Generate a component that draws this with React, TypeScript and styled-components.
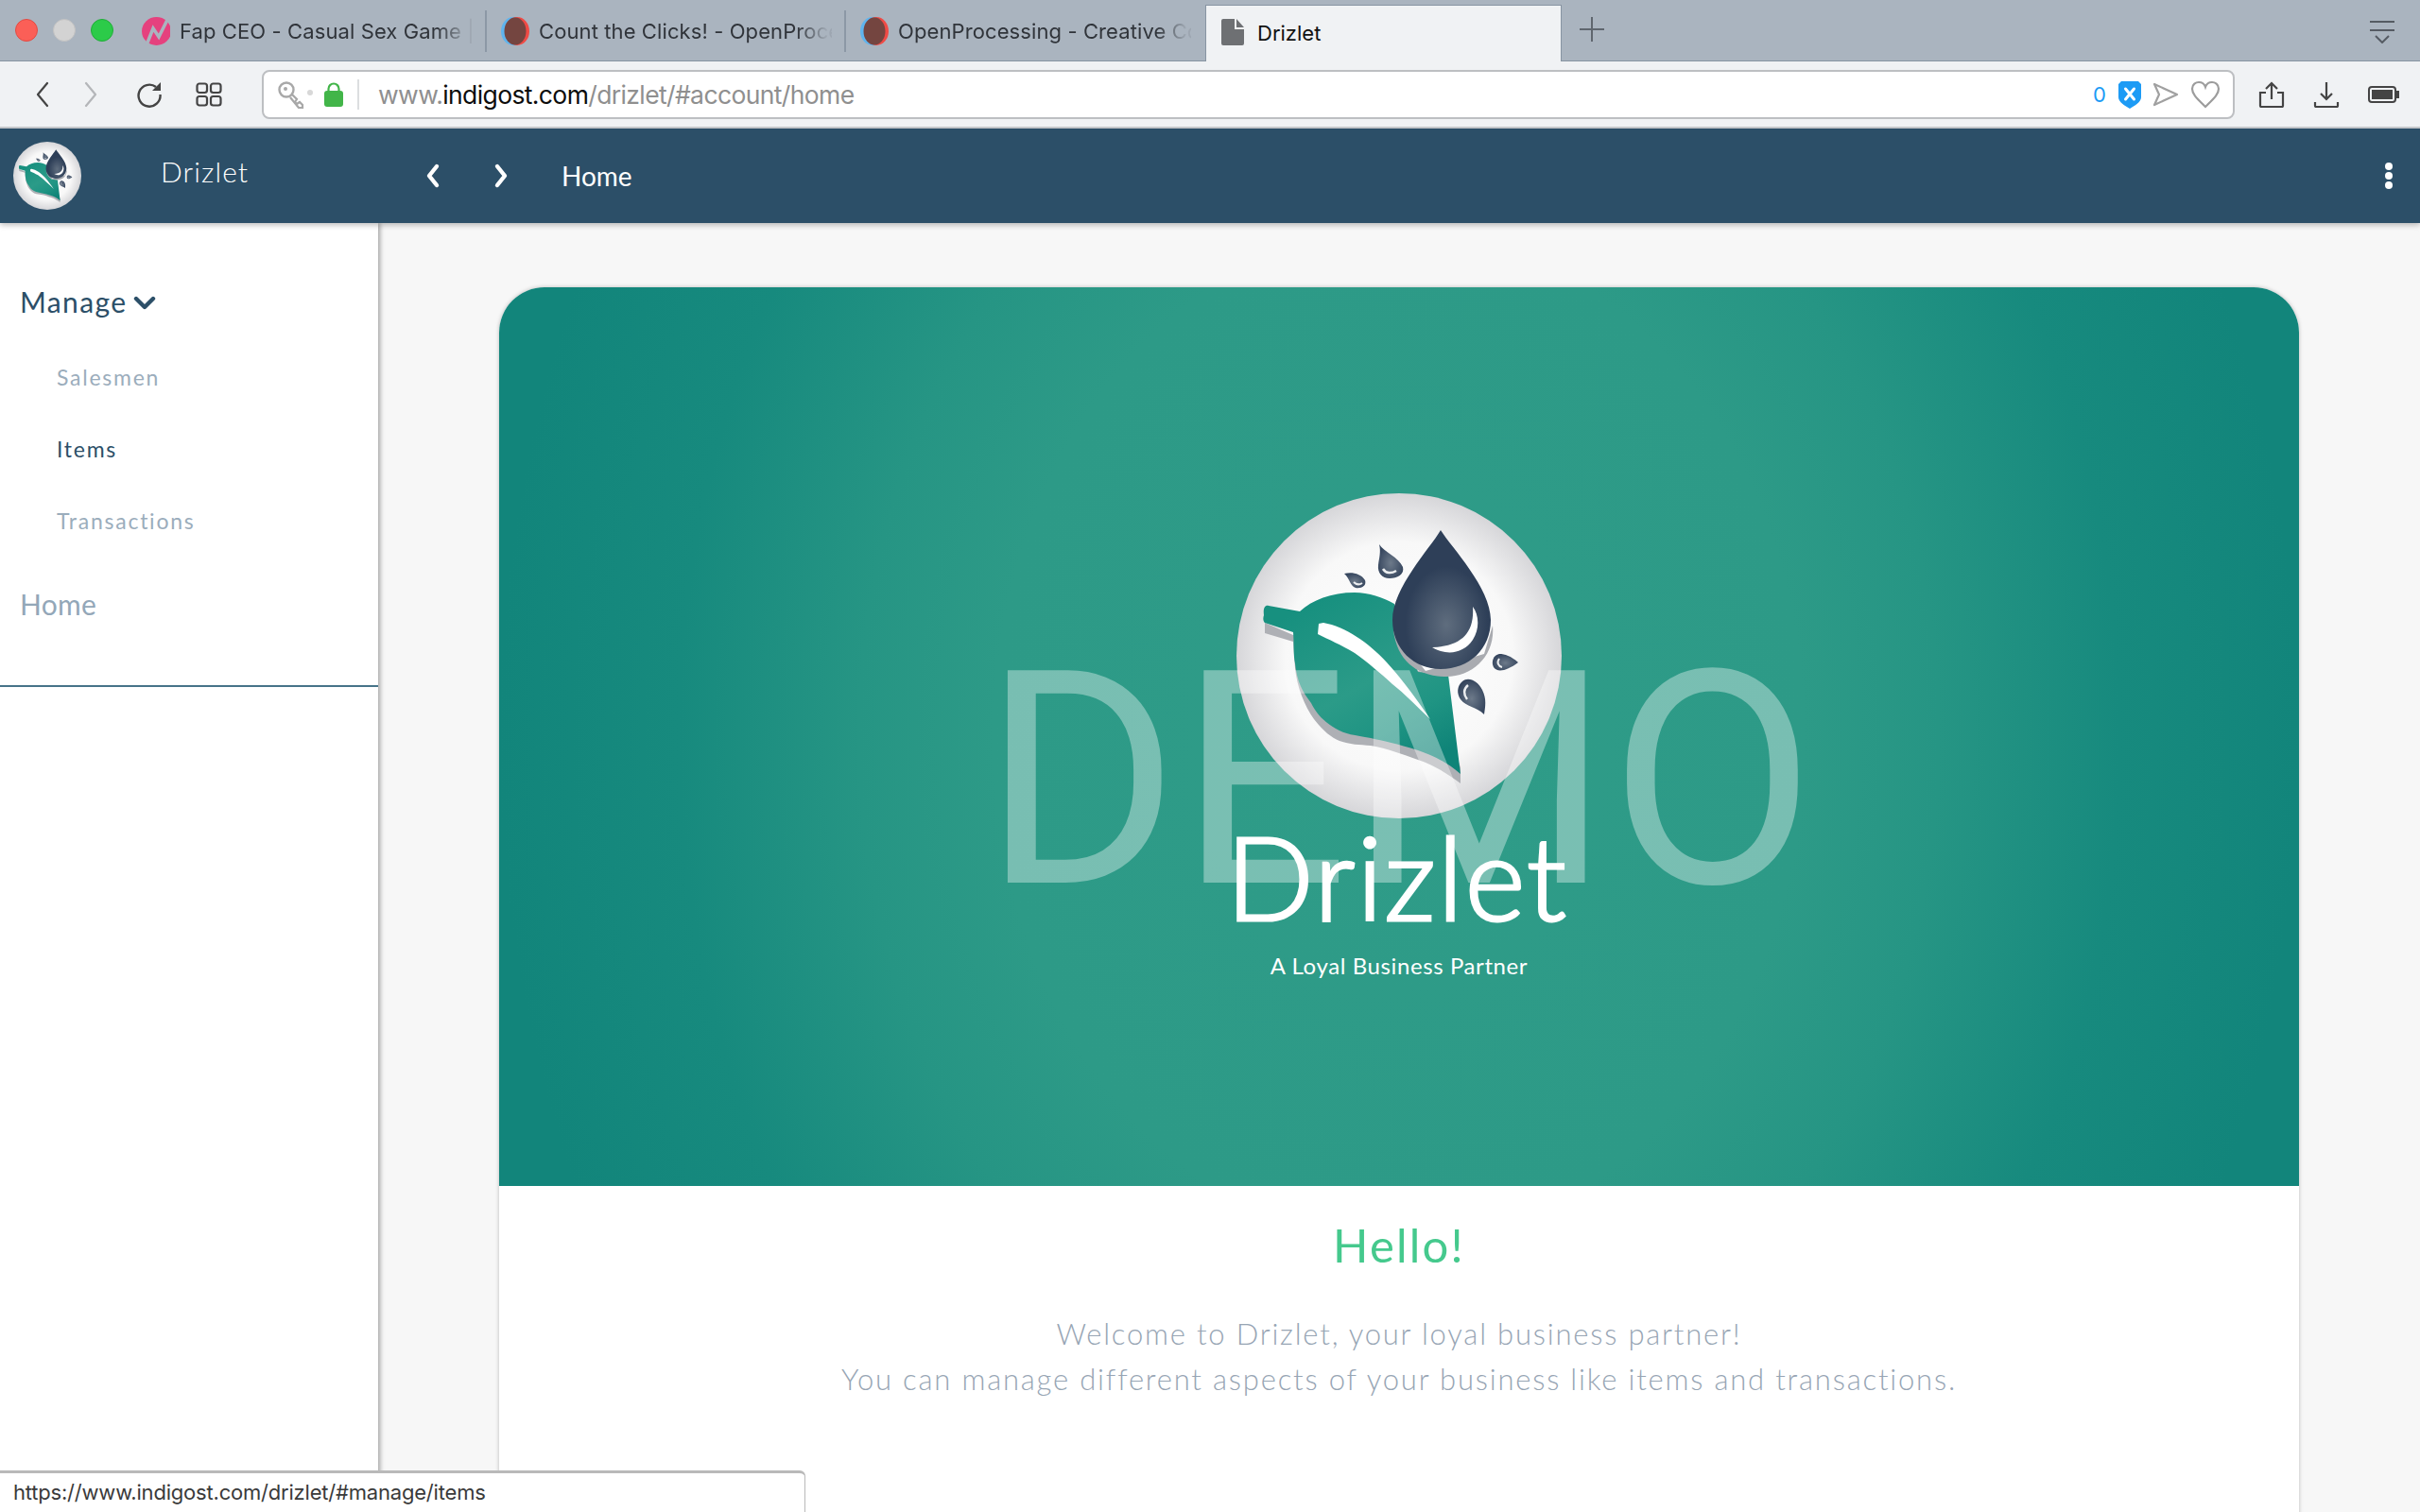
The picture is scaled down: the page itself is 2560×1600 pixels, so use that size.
import React from "react";
import styled, { createGlobalStyle } from "styled-components";

const Global = createGlobalStyle`
  html, body { margin: 0; padding: 0; height: 1600px; overflow: hidden; background: #f7f7f7; }
  * { box-sizing: border-box; }
`;
const ROUND = `"Lato", "Open Sans", sans-serif`;
const UI = `"Inter", "Liberation Sans", sans-serif`;

const Page = styled.div`width: 2560px; height: 1600px; display: flex; flex-direction: column; overflow: hidden;`;

const TabBar = styled.div`height: 65px; flex: none; display: flex; background: #aab4bf; border-bottom: 1px solid #8794a2; position: relative; z-index: 3;`;
const Lights = styled.div`width: 135px; flex: none; display: flex; align-items: center; gap: 16px; padding: 0 0 1px 16px;`;
const Light = styled.span<{ $c: string; $b: string }>`width: 24px; height: 24px; border-radius: 50%; background: ${p => p.$c}; border: 1px solid ${p => p.$b};`;
const Tab = styled.div<{ $last?: boolean }>`
  width: 380px; flex: none; height: 44px; margin-top: 11px; display: flex; align-items: center; gap: 10px; padding: 0 0 0 15px;
  border-right: 2px solid ${p => (p.$last ? "transparent" : "#8c98a6")};
`;
const TabTitle = styled.span`
  font: 400 22px/30px ${UI}; color: #30343a; white-space: nowrap; overflow: hidden; width: 310px; letter-spacing: .1px;
  -webkit-mask-image: linear-gradient(90deg, #000 88%, rgba(0,0,0,.1) 98%);
  mask-image: linear-gradient(90deg, #000 88%, rgba(0,0,0,.1) 98%);
`;
const ActiveTab = styled.div`
  width: 377px; flex: none; margin: 5px 0 -1px; display: flex; align-items: flex-start; gap: 14px; padding: 14px 0 0 16px;
  background: #f0f2f4; border: 1px solid #8794a2; border-bottom: none;
`;
const ActiveTitle = styled.span`font: 400 22px/30px ${UI}; color: #111;`;
const PlusBox = styled.div`width: 64px; flex: none; display: flex; align-items: center; justify-content: center; padding-bottom: 3px;`;
const TabMenu = styled.div`margin-left: auto; width: 80px; display: flex; align-items: center; justify-content: center; padding: 4px 0 0;`;

const Toolbar = styled.div`height: 71px; flex: none; display: flex; align-items: center; background: #f0f2f4; border-bottom: 2px solid #c2c5c9; position: relative; z-index: 3;`;
const NavIcons = styled.div`width: 277px; flex: none; display: flex; align-items: center; padding-left: 37px; gap: 0;`;
const NavSlot = styled.span<{ $w: number }>`width: ${p => p.$w}px; flex: none; display: flex; align-items: center;`;
const UrlBar = styled.div`width: 2087px; height: 52px; flex: none; display: flex; align-items: center; background: #fff; border: 2px solid #bdbfc2; border-radius: 8px; padding: 0 13px 0 15px;`;
const LockWrap = styled.span`display: flex; margin-left: 3px;`;
const UrlDivider = styled.span`width: 2px; height: 32px; background: #dcdee0; margin: 0 20px 0 15px;`;
const UrlText = styled.span`font: 400 26.5px/32px ${UI}; color: #8f8f8f; letter-spacing: -.62px; flex: 1; white-space: nowrap;`;
const UrlHost = styled.b`font-weight: 400; color: #0c0c0c;`;
const Count = styled.span`font: 400 22px/30px ${UI}; color: #1d9bf5; margin-right: 13px;`;
const UrlIcons = styled.div`display: flex; align-items: center; gap: 12px;`;
const RightIcons = styled.div`display: flex; align-items: center; gap: 30px; padding-left: 25px;`;

const Header = styled.header`
  height: 100px; flex: none; display: flex; align-items: center; background: #2c4f68; color: #fff; position: relative; z-index: 2;
  box-shadow: 0 2px 6px rgba(0,0,0,.28); padding: 0 29px 0 14px;
`;
const Brand = styled.div`width: 156px; flex: none; font: 300 30px/36px ${ROUND}; margin: -10px 0 0 84px; letter-spacing: 1.1px;`;
const HeaderNav = styled.div`display: flex; align-items: center; gap: 52px; margin-left: 122px;`;
const HeaderTitle = styled.span`font: 400 28px/36px ${ROUND}; margin-left: 54px;`;
const Dots = styled.div`margin-left: auto; display: flex; flex-direction: column; gap: 2px;`;
const Dot = styled.span`width: 8px; height: 8px; border-radius: 50%; background: #fff;`;

const Body = styled.div`flex: 1; display: flex; min-height: 0; position: relative;`;
const Sidebar = styled.aside`width: 400px; flex: none; background: #fff; box-shadow: 2px 0 5px rgba(0,0,0,.35); position: relative; z-index: 1;`;
const SideNav = styled.nav`padding: 58px 0 61px; border-bottom: 2px solid #477489;`;
const TopItem = styled.div<{ $active?: boolean }>`
  height: 50px; display: flex; align-items: center; gap: 6px; padding-left: 21px;
  font: 400 30px/50px ${ROUND}; letter-spacing: ${p => (p.$active ? "1.4px" : ".3px")}; color: ${p => (p.$active ? "#2c4f68" : "#93a7b8")};
`;
const ManageCaret = styled.svg`margin-top: 3px;`;
const SubList = styled.div`padding: 17px 0 25px;`;
const SubItem = styled.div<{ $active?: boolean }>`
  height: 76px; padding-left: 60px; font: 400 23px/76px ${ROUND}; letter-spacing: 1.75px;
  color: ${p => (p.$active ? "#2c4f68" : "#9badbc")};
`;

const Main = styled.main`flex: 1; padding: 68px 128px 0; min-width: 0; background: #f7f7f7;`;
const Card = styled.section`background: #fff; border-radius: 48px 48px 0 0; box-shadow: 0 0 4px rgba(0,0,0,.25); height: 1400px;`;
const Hero = styled.div`
  height: 951px; border-radius: 48px 48px 0 0; position: relative; overflow: hidden; display: flex; flex-direction: column; align-items: center; padding-top: 218px;
  background: radial-gradient(ellipse 50% 125% at 50% 50%, #2f9c88 0%, #2d9a87 45%, #269584 60%, #178a7e 80%, #12857b 100%);
`;
const HeroMark = styled.div`font: 300 122px/122px ${ROUND}; color: #fff; letter-spacing: 2px; margin-right: 4px; -webkit-text-stroke: 3px #fff;`;
const HeroTag = styled.div`font: 400 24px/30px ${ROUND}; color: #fff; margin-top: 19px; letter-spacing: .6px;`;
const Watermark = styled.div`
  position: absolute; left: 0; right: 0; top: 352px; text-align: center; font: 400 316px/340px "Roboto", sans-serif; color: rgba(255,255,255,.36);
`;
const CardBody = styled.div`padding-top: 32px; text-align: center;`;
const Hello = styled.h2`margin: 0; font: 400 49px/60px ${ROUND}; color: #45c98d; letter-spacing: 2.2px;`;
const Lead = styled.p`margin: 40px 0 0; font: 300 31px/48px ${ROUND}; color: #97a5b4; letter-spacing: 1.8px;`;

const StatusBar = styled.div`
  position: fixed; left: 0; bottom: 0; z-index: 5; width: 852px; height: 44px; background: #fff; border: solid #b9b9b9; border-width: 3px 1px 0 0; border-top-right-radius: 6px;
  padding-left: 14px; font: 400 22px/41px ${UI}; color: #3a3a3a; letter-spacing: -.2px;
`;

const Leaf: React.FC<{ size: number; id: string }> = ({ size, id }) => (
  <svg width={size} height={size} viewBox="0 0 344 344">
    <defs>
      <radialGradient id={`${id}c`} cx="50%" cy="50%" r="50%">
        <stop offset="0%" stopColor="#ffffff" />
        <stop offset="70%" stopColor="#f8f8f8" />
        <stop offset="100%" stopColor="#d6d6d9" />
      </radialGradient>
      <radialGradient id={`${id}d`} cx="55%" cy="68%" r="42%">
        <stop offset="0%" stopColor="#5f6d7e" />
        <stop offset="100%" stopColor="#2e3f58" />
      </radialGradient>
      <radialGradient id={`${id}s`} cx="50%" cy="55%" r="55%">
        <stop offset="0%" stopColor="#6d7a8a" />
        <stop offset="100%" stopColor="#35455d" />
      </radialGradient>
      <linearGradient id={`${id}l`} x1="25%" y1="5%" x2="80%" y2="95%">
        <stop offset="0%" stopColor="#17907f" />
        <stop offset="50%" stopColor="#2b9b88" />
        <stop offset="75%" stopColor="#1f9483" />
        <stop offset="100%" stopColor="#0f8478" />
      </linearGradient>
    </defs>
    <circle cx="172" cy="172" r="172" fill={`url(#${id}c)`} />
    <path d="M30 137 L30 148 L60 157 L62 185 C64 205 72 225 82 239 C92 252 100 258 109 262 C120 266 130 266 142 267 C160 270 175 276 192 282 C210 288 225 298 237 307 L237 290 L200 190 L60 150Z" fill="#aeb0b5" />
    <path d="M34 119 L67 125 C80 113 100 105 125 105 C140 105 155 110 167 117 L192 189 L224 192 L237 297 C220 282 205 277 192 272 C170 265 155 262 142 259 C125 256 115 255 105 249 C90 240 84 232 79 222 C70 210 64 200 62 180 C60 170 61 160 60 147 L30 137 C28 135 28 132 29 129 C28 122 30 118 34 119Z" fill={`url(#${id}l)`} />
    <path d="M87 138 L92 137 C115 141 140 158 159 179 C178 200 192 220 205 239 C190 225 178 212 165 202 C152 190 140 180 125 169 C110 160 98 155 86 149Z" fill="#fff" />
    <path d="M166 145 C170 178 192 194 222 194 C250 194 274 172 271 140 L262 170 L200 188Z" fill="#a9abb0" />
    <path d="M216 39 C205 58 165 100 165 134 C165 165 188 186 216 186 C246 186 269 165 269 134 C269 100 228 58 216 39Z" fill={`url(#${id}d)`} />
    <path d="M250 120 C252 148 238 162 207 163 C222 172 240 170 250 155 C258 142 256 128 250 120Z" fill="#fff" />
    <path d="M151 54 C156 62 172 68 176 78 C178 86 170 90 162 90 C154 90 149 84 150 76 C151 68 153 62 151 54Z" fill={`url(#${id}s)`} />
    <path d="M155 80 C158 85 164 85 169 82" fill="none" stroke="#eceef0" strokeWidth="2.5" />
    <path d="M114 85 C122 83 132 85 136 92 C138 98 132 101 126 100 C120 98 120 90 114 85Z" fill={`url(#${id}s)`} />
    <path d="M124 94 C127 97 130 97 133 95" fill="none" stroke="#eceef0" strokeWidth="2" />
    <path d="M298 179 C290 172 284 170 278 170 C272 171 269 178 272 184 C276 190 286 188 298 179Z" fill={`url(#${id}s)`} />
    <path d="M278 175 C275 179 277 183 281 184" fill="none" stroke="#eceef0" strokeWidth="2" />
    <path d="M262 234 C263 226 265 218 260 208 C255 198 245 194 239 199 C233 204 233 212 237 218 C243 226 254 226 262 234Z" fill={`url(#${id}s)`} />
    <path d="M245 203 C240 207 240 213 244 218" fill="none" stroke="#eceef0" strokeWidth="2.5" />
  </svg>
);

const Chevron: React.FC<{ d: string; w?: number; h?: number; c?: string; sw?: number }> = ({ d, w = 20, h = 30, c = "#fff", sw = 4.4 }) => (
  <svg width={w} height={h} viewBox={`0 0 ${w} ${h}`}><path d={d} fill="none" stroke={c} strokeWidth={sw} strokeLinecap="round" strokeLinejoin="round" /></svg>
);

const ProcessingIcon: React.FC = () => (
  <svg width="30" height="32" viewBox="0 0 30 32">
    <ellipse cx="13" cy="16" rx="13" ry="15" fill="#5fb4ee" />
    <ellipse cx="17" cy="16" rx="13" ry="15" fill="#f04a45" />
    <ellipse cx="15" cy="16" rx="11.5" ry="14.5" fill="#744540" />
  </svg>
);

export default function App() {
  return (
    <Page>
      <Global />
      <TabBar>
        <Lights>
          <Light $c="#fb5f57" $b="#e24b43" />
          <Light $c="#d3d3d3" $b="#c2c2c2" />
          <Light $c="#2ccb49" $b="#20ad38" />
        </Lights>
        <Tab>
          <svg width="30" height="32" viewBox="0 0 30 32">
            <ellipse cx="15.5" cy="16" rx="15.5" ry="15" fill="#e5417e" />
            <path d="M4 33 L12 13 L18 22 L28 2" fill="none" stroke="#aab4bf" strokeWidth="3.6" />
          </svg>
          <TabTitle>Fap CEO - Casual Sex Game | Fap</TabTitle>
        </Tab>
        <Tab>
          <ProcessingIcon />
          <TabTitle>Count the Clicks! - OpenProcessing</TabTitle>
        </Tab>
        <Tab $last>
          <ProcessingIcon />
          <TabTitle>OpenProcessing - Creative Coding</TabTitle>
        </Tab>
        <ActiveTab>
          <svg width="24" height="28" viewBox="0 0 24 28"><path d="M2 0 H14 V11 H24 V26 a2 2 0 0 1 -2 2 H2 a2 2 0 0 1 -2 -2 V2 a2 2 0 0 1 2 -2Z M16 0 L24 9 H16Z" fill="#6e7073" /></svg>
          <ActiveTitle>Drizlet</ActiveTitle>
        </ActiveTab>
        <PlusBox>
          <svg width="26" height="26" viewBox="0 0 26 26"><path d="M13 0 V26 M0 13 H26" stroke="#5f666e" strokeWidth="2" /></svg>
        </PlusBox>
        <TabMenu>
          <svg width="26" height="24" viewBox="0 0 26 24"><path d="M0 1 H26 M0 10 H26 M6 16 L13 23 L20 16" fill="none" stroke="#555b63" strokeWidth="2" /></svg>
        </TabMenu>
      </TabBar>
      <Toolbar>
        <NavIcons>
          <NavSlot $w={51}><Chevron d="M13 3 L3 15 L13 27" w={16} c="#444" sw={2.2} /></NavSlot>
          <NavSlot $w={56}><Chevron d="M3 3 L13 15 L3 27" w={16} c="#b4b6b9" sw={2.2} /></NavSlot>
          <NavSlot $w={63}>
            <svg width="28" height="28" viewBox="0 0 28 28"><path d="M21 6 A11.5 11.5 0 1 0 25.5 14" fill="none" stroke="#444" strokeWidth="2.4" /><path d="M26 1 V10 H17Z" fill="#444" /></svg>
          </NavSlot>
          <NavSlot $w={40}>
            <svg width="28" height="26" viewBox="0 0 28 26" fill="none" stroke="#444" strokeWidth="2.2"><rect x="1.5" y="1.5" width="10.5" height="9.5" rx="2.5" /><rect x="16" y="1.5" width="10.5" height="9.5" rx="2.5" /><rect x="1.5" y="15" width="10.5" height="9.5" rx="2.5" /><rect x="16" y="15" width="10.5" height="9.5" rx="2.5" /></svg>
          </NavSlot>
        </NavIcons>
        <UrlBar>
          <svg width="46" height="30" viewBox="0 0 46 30" fill="none">
            <circle cx="9" cy="10" r="7.5" stroke="#a8a8a8" strokeWidth="2.4" />
            <circle cx="8" cy="9" r="2" fill="#a8a8a8" />
            <path d="M15 15 L20 20 L18 23 L20 25 L23 23 L26 26 V29 H22 L13 18" stroke="#a8a8a8" strokeWidth="2.2" />
            <circle cx="34" cy="13" r="3" fill="#d8d8d8" />
          </svg>
          <LockWrap>
            <svg width="20" height="26" viewBox="0 0 20 26"><path d="M4.5 11 V7 a5.5 5.5 0 0 1 11 0 V11" fill="none" stroke="#42b549" strokeWidth="2.2" /><rect x="0" y="9" width="20" height="17" rx="3" fill="#42b549" /></svg>
          </LockWrap>
          <UrlDivider />
          <UrlText>www.<UrlHost>indigost.com</UrlHost>/drizlet/#account/home</UrlText>
          <Count>0</Count>
          <UrlIcons>
            <svg width="24" height="30" viewBox="0 0 24 30"><path d="M3 1 H21 L24 4 V18 C24 23 17 27 12 30 C7 27 0 23 0 18 V4Z" fill="#1d9bf5" /><path d="M7.5 9 L16.5 20 M16.5 9 L7.5 20" stroke="#fff" strokeWidth="3" strokeLinecap="round" /></svg>
            <svg width="28" height="26" viewBox="0 0 28 26"><path d="M2 2 L26 13 L2 24 L7 13Z" fill="none" stroke="#a0a0a0" strokeWidth="2.2" strokeLinejoin="round" /></svg>
            <svg width="32" height="30" viewBox="0 0 32 30"><path d="M16 28 C8 20 2 15 2 9 C2 4 6 2 9 2 C12 2 15 4 16 7 C17 4 20 2 23 2 C26 2 30 4 30 9 C30 15 24 20 16 28Z" fill="none" stroke="#9c9c9c" strokeWidth="2.2" /></svg>
          </UrlIcons>
        </UrlBar>
        <RightIcons>
          <svg width="28" height="28" viewBox="0 0 28 28" fill="none" stroke="#444" strokeWidth="2.2"><path d="M14 19 V2 M8 8 L14 2 L20 8" /><path d="M8 12 H2 V26 a1 1 0 0 0 1 1 H25 a1 1 0 0 0 1 -1 V12 H20" /></svg>
          <svg width="28" height="28" viewBox="0 0 28 28" fill="none" stroke="#444" strokeWidth="2.2"><path d="M14 1 V19 M8 13 L14 19 L20 13" /><path d="M2 22 V26 a1 1 0 0 0 1 1 H25 a1 1 0 0 0 1 -1 V22" /></svg>
          <svg width="33" height="18" viewBox="0 0 33 18"><rect x="1" y="1" width="28" height="16" rx="3" fill="none" stroke="#444" strokeWidth="2" /><rect x="4" y="4" width="22" height="10" fill="#444" /><rect x="30" y="5" width="3" height="8" fill="#444" /></svg>
        </RightIcons>
      </Toolbar>
      <Header>
        <Leaf size={72} id="a" />
        <Brand>Drizlet</Brand>
        <HeaderNav>
          <Chevron d="M14 5 L6 15 L14 25" w={20} />
          <Chevron d="M6 5 L14 15 L6 25" w={20} />
        </HeaderNav>
        <HeaderTitle>Home</HeaderTitle>
        <Dots><Dot /><Dot /><Dot /></Dots>
      </Header>
      <Body>
        <Sidebar>
          <SideNav>
            <TopItem $active>
              Manage
              <ManageCaret width="24" height="18" viewBox="0 0 24 18"><path d="M3 4 L12 13 L21 4" fill="none" stroke="#2c4f68" strokeWidth="4.4" strokeLinecap="round" strokeLinejoin="round" /></ManageCaret>
            </TopItem>
            <SubList>
              <SubItem>Salesmen</SubItem>
              <SubItem $active>Items</SubItem>
              <SubItem>Transactions</SubItem>
            </SubList>
            <TopItem>Home</TopItem>
          </SideNav>
        </Sidebar>
        <Main>
          <Card>
            <Hero>
              <Leaf size={344} id="b" />
              <HeroMark>Drizlet</HeroMark>
              <HeroTag>A Loyal Business Partner</HeroTag>
              <Watermark>DEMO</Watermark>
            </Hero>
            <CardBody>
              <Hello>Hello!</Hello>
              <Lead>
                Welcome to Drizlet, your loyal business partner!
                <br />
                You can manage different aspects of your business like items and transactions.
              </Lead>
            </CardBody>
          </Card>
        </Main>
      </Body>
      <StatusBar>https://www.indigost.com/drizlet/#manage/items</StatusBar>
    </Page>
  );
}
